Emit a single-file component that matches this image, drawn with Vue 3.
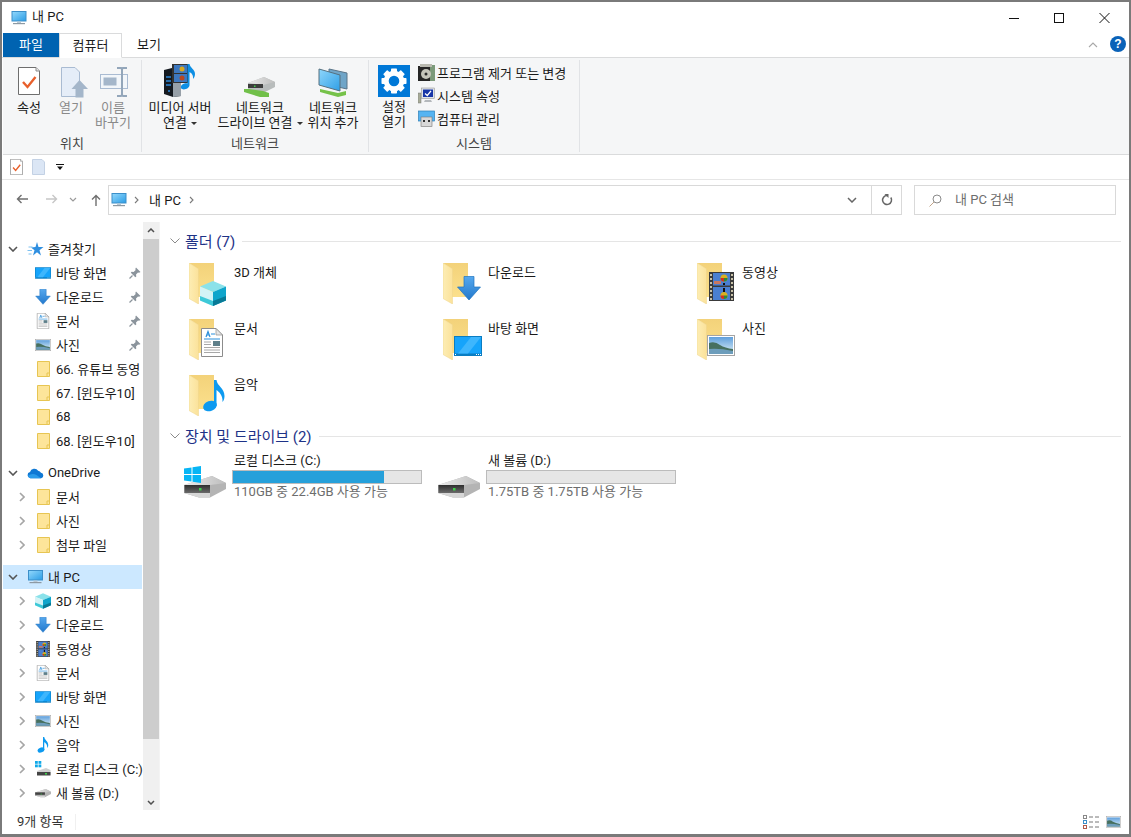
<script setup>
const teeth = [0, 45, 90, 135, 180, 225, 270, 315]

const location = [
  { icon: 'prop', lines: ['속성'], width: 42 },
  { icon: 'open', lines: ['열기'], width: 42, off: true },
  { icon: 'rename', lines: ['이름', '바꾸기'], width: 42, off: true },
]
const network = [
  { icon: 'media', lines: ['미디어 서버', '연결'], width: 66, caret: true },
  { icon: 'netdrive', lines: ['네트워크', '드라이브 연결'], width: 94, caret: true },
  { icon: 'netloc', lines: ['네트워크', '위치 추가'], width: 52 },
]
const system = [
  { icon: 'prog', text: '프로그램 제거 또는 변경' },
  { icon: 'sysprop', text: '시스템 속성' },
  { icon: 'mgmt', text: '컴퓨터 관리' },
]

const navGroups = [
  [
    { lv: 0, chev: 'open', icon: 'star', text: '즐겨찾기' },
    { lv: 1, icon: 'desktop', text: '바탕 화면', pin: true },
    { lv: 1, icon: 'arrow', text: '다운로드', pin: true },
    { lv: 1, icon: 'doc', text: '문서', pin: true },
    { lv: 1, icon: 'photo', text: '사진', pin: true },
    { lv: 1, icon: 'smallfolder', text: '66. 유튜브 동영' },
    { lv: 1, icon: 'smallfolder', text: '67. [윈도우10]' },
    { lv: 1, icon: 'smallfolder', text: '68' },
    { lv: 1, icon: 'smallfolder', text: '68. [윈도우10]' },
  ],
  [
    { lv: 0, chev: 'open', icon: 'cloud', text: 'OneDrive' },
    { lv: 1, chev: 'closed', icon: 'smallfolder', text: '문서' },
    { lv: 1, chev: 'closed', icon: 'smallfolder', text: '사진' },
    { lv: 1, chev: 'closed', icon: 'smallfolder', text: '첨부 파일' },
  ],
  [
    { lv: 0, chev: 'open', icon: 'pc', text: '내 PC', selected: true },
    { lv: 1, chev: 'closed', icon: 'cube', text: '3D 개체' },
    { lv: 1, chev: 'closed', icon: 'arrow', text: '다운로드' },
    { lv: 1, chev: 'closed', icon: 'film', text: '동영상' },
    { lv: 1, chev: 'closed', icon: 'doc', text: '문서' },
    { lv: 1, chev: 'closed', icon: 'desktop', text: '바탕 화면' },
    { lv: 1, chev: 'closed', icon: 'photo', text: '사진' },
    { lv: 1, chev: 'closed', icon: 'music', text: '음악' },
    { lv: 1, chev: 'closed', icon: 'sysdisk', text: '로컬 디스크 (C:)' },
    { lv: 1, chev: 'closed', icon: 'disk', text: '새 볼륨 (D:)' },
  ],
]

const folders = [
  { text: '3D 개체', icon: 'cube', cls: 'ov-cube' },
  { text: '다운로드', icon: 'arrow', cls: 'ov-arrow' },
  { text: '동영상', icon: 'film', cls: 'ov-film' },
  { text: '문서', icon: 'doc', cls: 'ov-doc' },
  { text: '바탕 화면', icon: 'desktop', cls: 'ov-desktop' },
  { text: '사진', icon: 'photo', cls: 'ov-photo' },
  { text: '음악', icon: 'music', cls: 'ov-music' },
]

const drives = [
  { name: '로컬 디스크 (C:)', free: '110GB 중 22.4GB 사용 가능', used: 80.5, win: true },
  { name: '새 볼륨 (D:)', free: '1.75TB 중 1.75TB 사용 가능', used: 0 },
]
</script>

<template>
  <svg class="defs" aria-hidden="true">
    <defs>
      <linearGradient id="gScreen" x1="0" y1="0" x2="1" y2="1"><stop offset="0" stop-color="#8fd6fb"/><stop offset="1" stop-color="#2f9fe6"/></linearGradient>
      <linearGradient id="gArrow" x1="0" y1="0" x2="0" y2="1"><stop offset="0" stop-color="#55a8ee"/><stop offset="1" stop-color="#2278cc"/></linearGradient>
      <linearGradient id="gBack" x1="0" y1="0" x2="0" y2="1"><stop offset="0" stop-color="#f3d27a"/><stop offset="1" stop-color="#fbe08c"/></linearGradient>
      <linearGradient id="gFlap" x1="0" y1="0" x2="1" y2="0"><stop offset="0" stop-color="#fdedb4"/><stop offset="1" stop-color="#fbe29a"/></linearGradient>
      <linearGradient id="gSky" x1="0" y1="0" x2="0" y2="1"><stop offset="0" stop-color="#5f9fdc"/><stop offset="1" stop-color="#e2f2f8"/></linearGradient>
      <linearGradient id="gDriveTop" x1="0" y1="0" x2="1" y2="0"><stop offset="0" stop-color="#ececec"/><stop offset="1" stop-color="#bdbdbd"/></linearGradient>
      <linearGradient id="gSlab" x1="0" y1="0" x2="0" y2="1"><stop offset="0" stop-color="#2e2e2e"/><stop offset="1" stop-color="#6a6a6a"/></linearGradient>
    </defs>

    <symbol id="pc" viewBox="0 0 16 16">
      <rect x="0.500" y="1" width="15" height="10.500" fill="#3c8fc9"/>
      <rect x="1.500" y="2" width="13" height="8.500" fill="url(#gScreen)"/>
      <rect x="6" y="11.500" width="4" height="1.500" fill="#b8c8d4"/>
      <rect x="2" y="13" width="12" height="1.200" fill="#8d99a3"/>
    </symbol>
    <symbol id="star" viewBox="0 0 16 16">
      <path d="M9.500 1 L11 6 L16 6 L12 9.200 L13.500 14.500 L9.500 11.300 L5.500 14.500 L7 9.200 L3.500 6.500 L8 6 Z" fill="#2f8fe0"/>
      <path d="M1 6 H5 M0 9.500 H4.500 M1 13 H4" stroke="#7cc0f0" stroke-width="1"/>
    </symbol>
    <symbol id="cloud" viewBox="0 0 18 12">
      <path d="M3.500 11.500 A3.300 3.300 0 0 1 3.200 5 A4.800 4.800 0 0 1 11.800 3.500 A3.800 3.800 0 0 1 14.800 5.800 A2.900 2.900 0 0 1 15 11.500 Z" fill="#0f78d4"/>
      <path d="M1 9 Q5 5.500 10 8 L15 11.500 H3.500 Q1.500 11 1 9 Z" fill="#2a9bea"/>
    </symbol>
    <symbol id="smallfolder" viewBox="0 0 13 16">
      <path d="M0.500 0.500 H12.500 V15.500 H0.500 Z" fill="#fde59a" stroke="#e7c552"/>
      <path d="M10 15 V12 H12" fill="none" stroke="#e7c552"/>
    </symbol>
    <symbol id="bigfolder" viewBox="0 0 26 41">
      <path d="M0 0 H25 V34 H9 V6 Z" fill="url(#gBack)"/>
      <path d="M0 0 L9.500 5.800 V41 L0 35.500 Z" fill="url(#gFlap)" stroke="#eed58a" stroke-width="0.500"/>
    </symbol>
    <symbol id="cube" viewBox="0 0 26 25">
      <path d="M13 0 L26 5.500 L13 11 L0 5.500 Z" fill="#8be2ea"/>
      <path d="M0 5.500 L13 11 V25 L0 19.500 Z" fill="#d3f3f6"/>
      <path d="M0 15 L13 20 V25 L0 19.500 Z" fill="#3ec9d8"/>
      <path d="M26 5.500 L13 11 V25 L26 19.500 Z" fill="#10a5cb"/>
      <path d="M26 15 L13 20 V25 L26 19.500 Z" fill="#087a96"/>
    </symbol>
    <symbol id="arrow" viewBox="0 0 24 25">
      <path d="M7 0.500 H17 V11 H23.500 L12 24 L0.500 11 H7 Z" fill="url(#gArrow)" stroke="#1f74bf" stroke-width="0.700"/>
    </symbol>
    <symbol id="desktop" viewBox="0 0 28 20">
      <rect width="28" height="20" fill="#0a7dc2"/>
      <rect x="1" y="1" width="26" height="16.500" fill="#16a4fb"/>
      <path d="M4 17.500 L17 1 H27 L14 17.500 Z" fill="#3eb6fd"/>
      <path d="M1 18.500 H2 M22 18.500 H23 M24 18.500 H25 M26 18.500 H27" stroke="#fff"/>
    </symbol>
    <symbol id="doc" viewBox="0 0 22 29">
      <path d="M0.500 0.500 H15 L21.500 7 V28.500 H0.500 Z" fill="#fff" stroke="#8c8c8c"/>
      <path d="M15 0.500 V7 H21.500 Z" fill="#e6e6e6" stroke="#8c8c8c" stroke-width="0.700"/>
      <path d="M5 9 L7 3.500 L9 9 M5.800 7 H8.200" fill="none" stroke="#2b8fdb" stroke-width="1.200"/>
      <path d="M10 6 H14 M3 11 H19" stroke="#2b8fdb" stroke-width="1.200"/>
      <rect x="12" y="13" width="7" height="5" fill="#5e7f8a"/>
      <path d="M3 14 H10 M3 16.500 H10 M3 19.500 H19 M3 22 H19 M3 24.500 H19" stroke="#a8a8a8"/>
    </symbol>
    <symbol id="film" viewBox="0 0 25 29">
      <rect width="25" height="29" fill="#3a3a3a"/>
      <g fill="#c9c2a8">
        <rect x="1" y="2" width="2" height="2"/><rect x="1" y="6" width="2" height="2"/><rect x="1" y="10" width="2" height="2"/><rect x="1" y="14" width="2" height="2"/><rect x="1" y="18" width="2" height="2"/><rect x="1" y="22" width="2" height="2"/><rect x="1" y="26" width="2" height="2"/>
        <rect x="22" y="2" width="2" height="2"/><rect x="22" y="6" width="2" height="2"/><rect x="22" y="10" width="2" height="2"/><rect x="22" y="14" width="2" height="2"/><rect x="22" y="18" width="2" height="2"/><rect x="22" y="22" width="2" height="2"/><rect x="22" y="26" width="2" height="2"/>
      </g>
      <rect x="4" y="1" width="17" height="12.500" fill="#4a7fd0"/>
      <rect x="4" y="15" width="17" height="13" fill="#4a7fd0"/>
      <circle cx="15" cy="6" r="3.500" fill="#d8b020"/><path d="M11.500 6 A3.500 3.500 0 0 0 15 9.500 V6 Z" fill="#d03020"/><path d="M15 9.500 A3.500 3.500 0 0 0 18.500 6 H15 Z" fill="#2a8a3a"/>
      <rect x="5" y="9" width="7" height="3" fill="#c87860"/><rect x="14" y="11" width="2" height="2" fill="#111"/>
      <circle cx="15" cy="23.500" r="3.500" fill="#d8b020"/><path d="M11.500 23.500 A3.500 3.500 0 0 0 15 27 V23.500 Z" fill="#d03020"/><path d="M15 27 A3.500 3.500 0 0 0 18.500 23.500 H15 Z" fill="#2a8a3a"/>
      <rect x="14" y="16" width="2" height="4" fill="#111"/>
    </symbol>
    <symbol id="photo" viewBox="0 0 28 21">
      <rect x="0.500" y="0.500" width="27" height="20" fill="#fff" stroke="#a4a4a4"/>
      <rect x="2" y="2" width="24" height="17" fill="url(#gSky)"/>
      <path d="M2 8 Q8 6 13 10 Q18 13 26 14 V19 H2 Z" fill="#47705f"/>
      <path d="M2 14 Q12 13 26 16 V19 H2 Z" fill="#6d9dbb"/>
    </symbol>
    <symbol id="music" viewBox="0 0 22 32">
      <ellipse cx="7" cy="26" rx="7" ry="5" transform="rotate(-20 7 26)" fill="#0d9af0"/>
      <path d="M11 0 H13.500 C14 6 21.500 8 21.500 16 C21.500 19 20.500 21 19.500 22 C20 15 16 12 13.500 10 V26 H11 Z" fill="#0d9af0"/>
    </symbol>
    <symbol id="disk" viewBox="0 0 42 23">
      <path d="M0 10 L28 1 L42 8 V14 L26 22.500 H15 L0 18 Z" fill="#b4b4b4"/>
      <path d="M0 10 L28 1 L42 8 L26 10 Z" fill="url(#gDriveTop)"/>
      <rect x="0.500" y="10" width="25.500" height="8" fill="url(#gSlab)"/>
      <rect x="15" y="13" width="2.500" height="2.500" fill="#3ed24a"/>
      <path d="M0 18 H26 V22.500 H15 Z" fill="#d6d6d6"/>
    </symbol>
    <symbol id="sysdisk" viewBox="0 0 16 16">
      <g fill="#10a8e8"><rect x="0" y="0" width="2.800" height="2.800"/><rect x="3.500" y="0" width="2.800" height="2.800"/><rect x="0" y="3.500" width="2.800" height="2.800"/><rect x="3.500" y="3.500" width="2.800" height="2.800"/></g>
      <path d="M2 10 L11 7 L15.500 9 V14 H2 Z" fill="#cfcfcf"/>
      <rect x="2" y="11" width="13.500" height="3.500" fill="#444"/>
      <rect x="10" y="12" width="2" height="1.500" fill="#3ed24a"/>
    </symbol>
    <symbol id="winlogo" viewBox="0 0 17 17">
      <path d="M0 2.500 L7.500 1.400 V8 H0 Z M8.500 1.200 L17 0 V8 H8.500 Z M0 9 H7.500 V15.600 L0 14.500 Z M8.500 9 H17 V17 L8.500 15.800 Z" fill="#07b5f5"/>
    </symbol>

    <symbol id="prop" viewBox="0 0 34 34">
      <path d="M6.500 3.500 H24 L27.500 7 V30.500 H6.500 Z" fill="#fff" stroke="#6e6e6e"/>
      <path d="M24 3.500 V7 H27.500" fill="#e8e8e8" stroke="#8a8a8a"/>
      <path d="M11 18 L15.500 23 L23.500 13" fill="none" stroke="#e8602c" stroke-width="2.400"/>
    </symbol>
    <symbol id="open" viewBox="0 0 34 34">
      <path d="M7.500 3.500 H21 L25.500 8 V32.500 H7.500 Z" fill="#e5edf8" stroke="#a9bbd2"/>
      <path d="M21.500 33.500 V25 H17.500 L25.500 16 L34 25 H29.500 V33.500 Z" fill="#a4b6ca"/>
    </symbol>
    <symbol id="rename" viewBox="0 0 34 34">
      <rect x="4.500" y="10.500" width="27" height="14" fill="#f2f6fa" stroke="#a9bbd2"/>
      <rect x="7.500" y="13.500" width="13" height="8" fill="#a4b6ca"/>
      <path d="M21 4 H25 L26 5 L27 4 H31 M26 5 V31 M21 32 H25 L26 31 L27 32 H31" fill="none" stroke="#93a6ba" stroke-width="2"/>
    </symbol>
    <symbol id="media" viewBox="0 0 34 34">
      <path d="M1 6 L9 4 L18 5 V32 L10 33 L1 30 Z" fill="#151a20"/>
      <path d="M10 9 V33 L18 32 V8 Z" fill="#97a0a8"/>
      <path d="M3 13 H8 M3 17 H8 M3 21 H8" stroke="#2d88d8" stroke-width="1.300"/>
      <circle cx="6" cy="27" r="1" fill="#2d88d8"/>
      <rect x="9" y="0" width="17" height="19" fill="#333"/>
      <rect x="11" y="1" width="13" height="8" fill="#3d78c0"/><rect x="11" y="10" width="13" height="8" fill="#3d78c0"/>
      <circle cx="19" cy="5" r="2.500" fill="#d8a820"/><circle cx="19" cy="14" r="2.500" fill="#b84820"/>
      <path d="M24.500 0 H26.500 C27 4 32 5 32 10 C32 12 31 14 30 15 C30.500 11 28.500 9 26.500 8 V21 C26.500 25 19.500 27 18 24 C17 21 21.500 18.500 24.500 19.500 Z" fill="#0d8fe4"/>
    </symbol>
    <symbol id="netdrive" viewBox="0 0 34 34">
      <path d="M5 19 L21 13 L32 18 L32 23 L20 29 H5 Z" fill="#b8bcbc"/>
      <path d="M5 19 L21 13 L32 18 L20 21 Z" fill="url(#gDriveTop)"/>
      <rect x="5" y="20" width="15" height="4" fill="#3d3d3d"/>
      <rect x="11" y="21.500" width="1.500" height="1.500" fill="#3ed24a"/>
      <path d="M1 25 H6 L20 27 L26 29 V33 H17 L1 28 Z" fill="#71c04a"/>
    </symbol>
    <symbol id="netloc" viewBox="0 0 34 34">
      <path d="M13 5 L31 9 V25 L13 21 Z" fill="#6fa5c8" stroke="#5a7488"/>
      <path d="M3 5 L24 11 V27 L3 21 Z" fill="url(#gScreen)" stroke="#56707f"/>
      <path d="M4 25 L22 29 L30 27 V31 L22 33 L4 28 Z" fill="#76c24a"/>
    </symbol>
    <symbol id="prog" viewBox="0 0 17 17">
      <rect x="0" y="2" width="17" height="15" fill="#252525"/>
      <rect x="12" y="1" width="5" height="16" fill="#7c9a7a"/>
      <rect x="2" y="0" width="12" height="3" fill="#b9b9b0"/>
      <circle cx="8" cy="10" r="5" fill="#c4c4ba"/><circle cx="8" cy="10" r="1.500" fill="#2a2a2a"/>
    </symbol>
    <symbol id="sysprop" viewBox="0 0 17 17">
      <rect x="0" y="6" width="3" height="10" fill="#a8ac98" stroke="#777" stroke-width="0.500"/>
      <rect x="3.500" y="1" width="13" height="10.500" fill="#dfe3e8" stroke="#888" stroke-width="0.500"/>
      <rect x="5" y="2.500" width="10" height="7.500" fill="#1836a8"/>
      <path d="M7 6.500 L9.300 8.500 L13 3.800" fill="none" stroke="#fff" stroke-width="1.300"/>
      <path d="M7 13 H13 L14 15 H6 Z" fill="#b4b8bc"/>
    </symbol>
    <symbol id="mgmt" viewBox="0 0 17 17">
      <rect x="0.500" y="1" width="16" height="10" fill="#55b4f2" stroke="#2d7fb8" stroke-width="0.700"/>
      <rect x="3" y="7" width="11" height="9.500" fill="#d8d8d8" stroke="#777" stroke-width="0.600"/>
      <rect x="5" y="10" width="2" height="2" fill="#333"/><rect x="10" y="10" width="2" height="2" fill="#333"/>
    </symbol>
    <symbol id="pin" viewBox="0 0 12 12">
      <path d="M7 0.500 L11.500 5 L10 5.800 L9 5.400 L7 7.500 L7.300 9.500 L6.300 10.300 L1.800 5.800 L2.600 4.800 L4.600 5 L6.700 3 L6.300 2 Z" fill="#8b949c"/>
      <path d="M3.500 8.500 L0.500 11.500" stroke="#8b949c" stroke-width="1.200"/>
    </symbol>
  </svg>

  <div class="window">
    <header class="titlebar">
      <svg class="ti-icon"><use href="#pc"/></svg>
      <span class="ti-text">내 PC</span>
      <div class="ti-btns">
        <svg class="wb" viewBox="0 0 45 31"><path d="M17 17.500 H27" stroke="#111"/></svg>
        <svg class="wb" viewBox="0 0 45 31"><rect x="17.500" y="12.500" width="9" height="9" fill="none" stroke="#111"/></svg>
        <svg class="wb" viewBox="0 0 45 31"><path d="M17.500 12 L27.500 22 M27.500 12 L17.500 22" stroke="#111"/></svg>
      </div>
    </header>

    <nav class="tabs">
      <span class="tab file">파일</span>
      <span class="tab active">컴퓨터</span>
      <span class="tab">보기</span>
      <svg class="collapse" viewBox="0 0 10 6"><path d="M1 5 L5 1 L9 5" fill="none" stroke="#a8a8a8" stroke-width="1.100"/></svg>
      <span class="help">?</span>
    </nav>

    <section class="ribbon">
      <div class="group g1">
        <div class="btns">
          <div v-for="b in location" :key="b.icon" class="bb" :class="{ off: b.off }" :style="{ width: b.width + 'px' }">
            <svg class="bb-icon"><use :href="'#' + b.icon"/></svg>
            <span v-for="l in b.lines" :key="l" class="bb-line">{{ l }}</span>
          </div>
        </div>
        <div class="g-label">위치</div>
      </div>
      <div class="group g2">
        <div class="btns">
          <div v-for="b in network" :key="b.icon" class="bb" :style="{ width: b.width + 'px' }">
            <svg class="bb-icon"><use :href="'#' + b.icon"/></svg>
            <span v-for="(l, i) in b.lines" :key="l" class="bb-line">{{ l }}<i v-if="b.caret && i === 1" class="caret"></i></span>
          </div>
        </div>
        <div class="g-label">네트워크</div>
      </div>
      <div class="group g3">
        <div class="btns">
          <div class="bb settings">
            <svg class="gear" viewBox="0 0 32 32">
              <rect width="32" height="32" fill="#0078d7"/>
              <rect v-for="t in teeth" :key="t" x="13" y="3.500" width="6" height="6" rx="0.800" fill="#fff" :transform="`rotate(${t} 16 16)`"/>
              <circle cx="16" cy="16" r="7.800" fill="none" stroke="#fff" stroke-width="5"/>
            </svg>
            <span class="bb-line">설정</span>
            <span class="bb-line">열기</span>
          </div>
          <div class="smalls">
            <div v-for="s in system" :key="s.icon" class="small">
              <svg class="sm-icon"><use :href="'#' + s.icon"/></svg>
              <span>{{ s.text }}</span>
            </div>
          </div>
        </div>
        <div class="g-label">시스템</div>
      </div>
    </section>

    <div class="qat">
      <svg class="q-check" viewBox="6 3 22 28"><use href="#prop" width="34" height="34"/></svg>
      <svg class="q-doc" viewBox="0 0 13 16"><path d="M0.500 0.500 H10 L12.500 3 V15.500 H0.500 Z" fill="#dbe6f5" stroke="#c3d1e4"/></svg>
      <svg class="q-drop" viewBox="0 0 8 7"><path d="M0 0.500 H8" stroke="#111"/><path d="M1 2.500 H7 L4 6 Z" fill="#111"/></svg>
    </div>

    <div class="addr">
      <svg class="ar back" viewBox="0 0 12 10"><path d="M12 5 H1.500 M5.500 1 L1.500 5 L5.500 9" fill="none" stroke="#6f6f6f" stroke-width="1.400"/></svg>
      <svg class="ar fwd" viewBox="0 0 12 10"><path d="M0 5 H10.500 M6.500 1 L10.500 5 L6.500 9" fill="none" stroke="#c6c6c6" stroke-width="1.400"/></svg>
      <svg class="ar-down" viewBox="0 0 8 5"><path d="M1 1 L4 4 L7 1" fill="none" stroke="#9a9a9a" stroke-width="1.200"/></svg>
      <svg class="ar up" viewBox="0 0 10 12"><path d="M5 12 V1.500 M1 5.500 L5 1.500 L9 5.500" fill="none" stroke="#6f6f6f" stroke-width="1.400"/></svg>
      <div class="addr-box">
        <svg class="addr-pc"><use href="#pc"/></svg>
        <svg class="crumb" viewBox="0 0 5 8"><path d="M1 1 L4 4 L1 7" fill="none" stroke="#7a7a7a" stroke-width="1.100"/></svg>
        <span class="addr-text">내 PC</span>
        <svg class="crumb" viewBox="0 0 5 8"><path d="M1 1 L4 4 L1 7" fill="none" stroke="#7a7a7a" stroke-width="1.100"/></svg>
        <span class="spacer"></span>
        <svg class="addr-drop" viewBox="0 0 10 6"><path d="M1 1 L5 5 L9 1" fill="none" stroke="#666" stroke-width="1.500"/></svg>
        <span class="refresh">
          <svg viewBox="0 0 12 12"><path d="M9.800 3.500 A4.500 4.500 0 1 1 6 1.500" fill="none" stroke="#666" stroke-width="1.500"/><path d="M3.500 0 H7.500 V4 Z" fill="#666"/></svg>
        </span>
      </div>
      <div class="search">
        <svg viewBox="0 0 13 13"><circle cx="8" cy="5" r="4" fill="none" stroke="#8a8a8a"/><path d="M5 8 L0.500 12.500" stroke="#c2a58a"/></svg>
        <span class="search-text">내 PC 검색</span>
      </div>
    </div>

    <main class="main">
      <aside class="nav">
        <div v-for="(g, gi) in navGroups" :key="gi" class="nav-group">
          <div v-for="n in g" :key="n.text" class="row" :class="['lv' + n.lv, { sel: n.selected }]">
            <span class="chev">
              <svg v-if="n.chev === 'open'" viewBox="0 0 10 6"><path d="M1 1 L5 5 L9 1" fill="none" stroke="#555" stroke-width="1.600"/></svg>
              <svg v-else-if="n.chev === 'closed'" class="right" viewBox="0 0 6 10"><path d="M1 1 L5 5 L1 9" fill="none" stroke="#a6a6a6" stroke-width="1.600"/></svg>
            </span>
            <svg class="nav-icon" :class="'ni-' + n.icon"><use :href="'#' + n.icon"/></svg>
            <span class="nav-text">{{ n.text }}</span>
            <svg v-if="n.pin" class="pin"><use href="#pin"/></svg>
          </div>
        </div>
      </aside>

      <div class="scroll">
        <div class="s-btn"><svg viewBox="0 0 8 5"><path d="M1 4 L4 1 L7 4" fill="none" stroke="#505050" stroke-width="1.500"/></svg></div>
        <div class="s-track"><div class="s-thumb"></div></div>
        <div class="s-btn"><svg viewBox="0 0 8 5"><path d="M1 1 L4 4 L7 1" fill="none" stroke="#505050" stroke-width="1.500"/></svg></div>
      </div>

      <div class="content">
        <div class="g-head first">
          <svg viewBox="0 0 10 6"><path d="M0.500 0.500 L5 5 L9.500 0.500" fill="none" stroke="#8a8a8a"/></svg>
          <span class="g-title">폴더 <em>(7)</em></span>
          <span class="g-rule"></span>
        </div>
        <div class="grid">
          <div v-for="f in folders" :key="f.text" class="tile">
            <div class="tile-ic">
              <svg class="big-folder"><use href="#bigfolder"/></svg>
              <svg class="ov" :class="f.cls"><use :href="'#' + f.icon"/></svg>
            </div>
            <span class="tile-text">{{ f.text }}</span>
          </div>
        </div>

        <div class="g-head">
          <svg viewBox="0 0 10 6"><path d="M0.500 0.500 L5 5 L9.500 0.500" fill="none" stroke="#8a8a8a"/></svg>
          <span class="g-title">장치 및 드라이브 <em>(2)</em></span>
          <span class="g-rule"></span>
        </div>
        <div class="drives">
          <div v-for="d in drives" :key="d.name" class="drive">
            <div class="drive-ic">
              <svg v-if="d.win" class="win"><use href="#winlogo"/></svg>
              <svg class="drive-disk"><use href="#disk"/></svg>
            </div>
            <div class="drive-info">
              <div class="d-name">{{ d.name }}</div>
              <div class="bar"><div class="fill" :style="{ width: d.used + '%' }"></div></div>
              <div class="d-free">{{ d.free }}</div>
            </div>
          </div>
        </div>
      </div>
    </main>

    <footer class="status">
      <span class="st-count">9개 항목</span>
      <span class="st-views">
        <svg class="st-list" viewBox="0 0 17 14">
          <rect x="0.500" y="0.500" width="3" height="3" fill="#fff" stroke="#888"/><rect x="0.500" y="5.500" width="3" height="3" fill="#fff" stroke="#3c8fc9"/><rect x="0.500" y="10.500" width="3" height="3" fill="#fff" stroke="#b05a4a"/>
          <path d="M6 2 H10 M12 2 H16 M6 7 H10 M12 7 H16 M6 12 H10 M12 12 H16" stroke="#777"/>
        </svg>
        <svg class="st-photo"><use href="#photo"/></svg>
      </span>
    </footer>
  </div>
</template>

<style>
html, body { margin: 0; padding: 0; background: #fff; }
</style>

<style scoped>
.defs { position: absolute; width: 0; height: 0; overflow: hidden; }
.window {
  box-sizing: border-box;
  width: 1131px;
  height: 837px;
  border: solid #7a7a7a;
  border-width: 2px 2px 3px 2px;
  background: #fff;
  display: flex;
  flex-direction: column;
  font-family: Roboto, "Noto Sans CJK KR", sans-serif;
  font-size: 13px;
  color: #1a1a1a;
  overflow: hidden;
}
.titlebar { height: 31px; display: flex; align-items: center; flex: none; }
.ti-icon { width: 16px; height: 16px; margin-left: 9px; }
.ti-text { margin: -4px 0 0 5px; }
.ti-btns { margin-left: auto; display: flex; margin-right: 2px; }
.wb { width: 45px; height: 31px; margin-top: -2px; }

.tabs { height: 24px; flex: none; display: flex; align-items: stretch; padding-left: 1px; border-bottom: 1px solid #dadbdc; position: relative; }
.tab { width: 56px; display: flex; align-items: center; justify-content: center; box-sizing: border-box; padding-bottom: 3px; }
.tab.file { background: #0063b1; color: #fff; height: 24px; }
.tab.active { width: 63px; border: 1px solid #dadbdc; border-bottom: 1px solid #fff; height: 25px; background: #fff; }
.tab:nth-child(3) { width: 54px; }
.collapse { width: 10px; height: 6px; position: absolute; right: 31px; top: 9px; }
.help { position: absolute; right: 3px; top: 3px; width: 16px; height: 16px; border-radius: 50%; background: #0a62b8; color: #fff; font: bold 12px/16px "Liberation Sans", sans-serif; text-align: center; }

.ribbon { height: 96px; flex: none; display: flex; margin: 0 0 0 1px; background: #f5f6f7; border-bottom: 1px solid #dadbdc; }
.group { display: flex; flex-direction: column; height: 92px; margin-top: 2px; border-right: 1px solid #e1e3e6; box-sizing: content-box; }
.g1 { width: 138px; }
.g2 { width: 226px; }
.g3 { width: 210px; }
.btns { height: 76px; display: flex; padding-left: 5px; }
.bb { display: flex; flex-direction: column; align-items: center; flex: none; }
.bb.off { color: #8a8a8a; }
.bb-icon { width: 34px; height: 34px; margin-top: 4px; margin-bottom: 2px; flex: none; }
.bb-line { line-height: 15px; white-space: nowrap; }
.caret { display: inline-block; margin-left: 4px; border: 3px solid transparent; border-top-color: #333; border-bottom-width: 0; vertical-align: 2px; }
.settings { width: 40px; }
.gear { width: 32px; height: 32px; margin: 5px 0 2px 0; flex: none; }
.smalls { display: flex; flex-direction: column; padding: 1px 0 0 4px; }
.small { height: 23px; display: flex; align-items: center; white-space: nowrap; }
.sm-icon { width: 17px; height: 17px; margin-right: 2px; flex: none; }
.g-label { text-align: center; line-height: 15px; color: #444; }

.qat { height: 24px; flex: none; border-bottom: 1px solid #e6e6e6; display: flex; align-items: center; }
.q-check { width: 13px; height: 16px; margin-left: 8px; }
.q-doc { width: 13px; height: 16px; margin-left: 9px; }
.q-drop { width: 8px; height: 7px; margin-left: 11px; }

.addr { height: 42px; flex: none; box-sizing: border-box; padding-top: 5px; display: flex; align-items: flex-start; }
.ar { margin-top: 9px; }
.back { width: 12px; height: 10px; margin-left: 14px; }
.fwd { width: 12px; height: 10px; margin-left: 18px; }
.ar-down { width: 8px; height: 5px; margin: 12px 0 0 11px; }
.up { width: 10px; height: 12px; margin-left: 14px; }
.addr-box { box-sizing: border-box; width: 794px; height: 30px; margin-left: 7px; border: 1px solid #d9d9d9; display: flex; align-items: center; }
.addr-pc { width: 16px; height: 16px; margin-left: 2px; flex: none; }
.crumb { width: 5px; height: 8px; margin-left: 7px; flex: none; }
.addr-text { margin: 0 0 2px 10px; white-space: nowrap; }
.addr-text + .crumb { margin-left: 8px; }
.spacer { flex: 1; }
.addr-drop { width: 10px; height: 6px; margin-right: 14px; }
.refresh { width: 30px; height: 28px; border-left: 1px solid #d9d9d9; display: flex; align-items: center; justify-content: center; box-sizing: border-box; }
.refresh svg { width: 12px; height: 12px; }
.search { box-sizing: border-box; width: 202px; height: 30px; margin-left: 12px; border: 1px solid #d9d9d9; display: flex; align-items: center; color: #6d6d6d; }
.search svg { width: 13px; height: 13px; margin: 0 13px 0 14px; }
.search-text { margin-bottom: 3px; }

.main { flex: 1; min-height: 0; display: flex; margin-left: 1px; }
.nav { width: 140px; flex: none; padding-top: 15px; box-sizing: border-box; overflow: hidden; }
.nav-group { margin-bottom: 8px; }
.row { height: 24px; display: flex; align-items: center; position: relative; white-space: nowrap; }
.row.sel { background: #cce8ff; margin-right: 1px; }
.chev { width: 10px; flex: none; display: flex; justify-content: center; }
.chev svg { width: 10px; height: 6px; }
.chev svg.right { width: 6px; height: 10px; }
.lv0 { padding-left: 5px; }
.lv0 .chev { margin-right: 9px; }
.lv0 .nav-icon { width: 17px; height: 16px; margin-right: 4px; }
.lv1 { padding-left: 14px; }
.lv1 .chev { margin-right: 8px; }
.lv1 .nav-icon { width: 16px; height: 16px; margin-right: 5px; }
.lv1 .ni-smallfolder { width: 13px; margin: 0 6px 0 2px; }
.nav-icon { flex: none; }
.lv0 .ni-cloud { height: 12px; }
.nav-text { flex: none; margin-bottom: 2px; }
.pin { position: absolute; left: 126px; top: 6px; width: 12px; height: 12px; }

.scroll { width: 16px; flex: none; display: flex; flex-direction: column; background: #f0f0f0; border-right: 1px solid #f4f4f4; box-sizing: content-box; }
.s-btn { height: 16px; flex: none; display: flex; align-items: center; justify-content: center; }
.s-btn svg { width: 8px; height: 5px; }
.s-track { flex: 1; padding-top: 1px; }
.s-thumb { height: 500px; background: #cdcdcd; }

.content { flex: 1; min-width: 0; overflow: hidden; }
.g-head { height: 18px; margin-top: 1px; display: flex; align-items: center; padding: 0 8px 0 10px; }
.g-head.first { margin-top: 10px; }
.g-head svg { width: 10px; height: 6px; flex: none; margin-right: 5px; }
.g-title { font-size: 15px; color: #1e3287; white-space: nowrap; margin-bottom: 2px; }
.g-title em { font-style: normal; }
.g-rule { flex: 1; height: 1px; background: #e5e5e5; margin-left: 7px; }
.grid { display: grid; grid-template-columns: repeat(3, 254px); grid-auto-rows: 56px; margin: 8px 0 0 29px; }
.tile { display: flex; align-items: flex-start; }
.tile-ic { width: 45px; height: 48px; position: relative; flex: none; padding-top: 5px; box-sizing: border-box; }
.big-folder { width: 26px; height: 41px; display: block; }
.ov { position: absolute; }
.ov-cube { left: 11px; top: 23px; width: 26px; height: 25px; }
.ov-arrow { left: 14px; top: 18px; width: 24px; height: 25px; }
.ov-film { left: 12px; top: 14px; width: 25px; height: 29px; }
.ov-doc { left: 12px; top: 14px; width: 22px; height: 29px; }
.ov-desktop { left: 11px; top: 22px; width: 28px; height: 20px; }
.ov-photo { left: 10px; top: 21px; width: 28px; height: 21px; }
.ov-music { left: 14px; top: 10px; width: 22px; height: 32px; }
.tile-text { margin-top: 6px; line-height: 18px; white-space: nowrap; }

.drives { display: flex; margin: 8px 0 0 24px; }
.drive { width: 254px; display: flex; flex: none; }
.drive-ic { width: 48px; height: 45px; flex: none; position: relative; padding-top: 22px; box-sizing: border-box; }
.drive-disk { width: 42px; height: 23px; display: block; }
.win { position: absolute; left: 0; top: 13px; width: 17px; height: 17px; }
.drive-info { width: 190px; }
.d-name { line-height: 14px; padding: 1px 0 0 2px; white-space: nowrap; }
.bar { box-sizing: border-box; height: 14px; margin-top: 2px; border: 1px solid #bcbcbc; background: #e6e6e6; }
.fill { height: 100%; background: #26a0da; }
.d-free { line-height: 14px; margin-top: 1px; padding-left: 2px; color: #6d6d6d; white-space: nowrap; }

.status { height: 24px; flex: none; display: flex; align-items: center; padding-left: 15px; }
.st-count { padding-right: 12px; border-right: 1px solid #f0f0f0; line-height: 16px; color: #333; }
.st-views { margin-left: auto; display: flex; align-items: center; margin-right: 8px; }
.st-list { width: 17px; height: 14px; margin-right: 6px; }
.st-photo { width: 15px; height: 12px; }
</style>
